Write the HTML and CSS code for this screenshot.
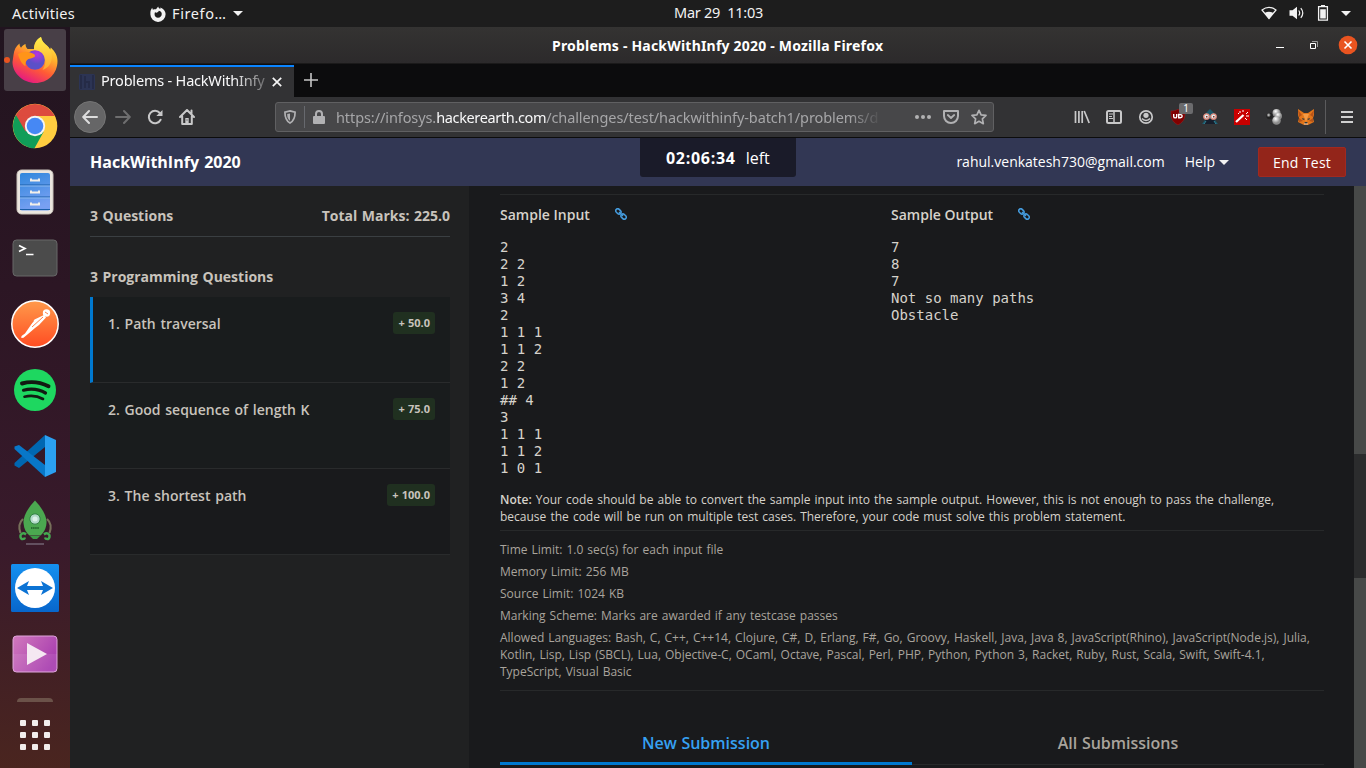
FILE: index.html
```html
<!DOCTYPE html>
<html lang="en">
<head>
<meta charset="utf-8">
<title>Problems - HackWithInfy 2020</title>
<link rel="stylesheet" href="styles.css">
</head>
<body>
<div class="desktop">
  <header class="topbar">
    <span class="activities">Activities</span>
    <span class="appmenu">
      <svg width="16" height="16" viewBox="0 0 16 16"><path fill="#f2f2f2" fill-rule="evenodd" d="M.4 6C.7 4 1.5 2.600 2.300 1.800c0 .9.300 1.500.700 1.900C4 3.100 5.300 3.200 6 3.300L8.200.4C8.200 1.500 9 2 10.400 3c0-.6 0-1-.2-1.600 3 1.100 5.400 3.500 5.400 6.800A7.600 7.600 0 0 1 .4 8.500zM5 6.200C3.700 9.500 5.500 11.800 8 11.800c2.600 0 4-2 3.700-4.300-.3-1.800-1.600-2.700-3-2.700.5 1-1.500 1.800-2.200 1.900z"/></svg>
      <span class="appname">Firefo…</span>
      <i class="caret"></i>
    </span>
    <span class="clock">Mar 29&nbsp; 11:03</span>
    <span class="tray">
      <svg width="16" height="14" viewBox="0 0 16 14"><path fill="none" stroke="#f2f2f2" stroke-width="1.200" d="M1 4Q8-1.200 15 4L8 12.500z"/><path fill="#f2f2f2" d="M3.600 7Q8 4.600 12.400 7L8 13z"/></svg>
      <svg width="16" height="14" viewBox="0 0 16 14"><path fill="#f2f2f2" d="M.5 4.300h3L8 .8v12.400L3.500 9.700h-3z"/><path fill="none" stroke="#f2f2f2" stroke-width="1.200" d="M9.700 4.500q2 2.500 0 5M11.800 2.200q4 4.800 0 9.600"/></svg>
      <svg width="12" height="16" viewBox="0 0 12 16"><path fill="none" stroke="#f2f2f2" stroke-width="1.300" d="M1.600 1.700h8.800v13.400H1.600z"/><path fill="#f2f2f2" d="M4 0h4v1.500H4zM3.200 4.200h5.600v9.300H3.200z"/></svg>
      <i class="caret"></i>
    </span>
  </header>

  <div class="workspace">
    <nav class="dock">
      <div class="dock-item active"><span class="dot"></span>
        <svg width="48" height="48" viewBox="0 0 48 48"><defs><linearGradient id="ff1" x1=".8" y1="0" x2=".3" y2="1"><stop offset="0" stop-color="#fff44f"/><stop offset=".35" stop-color="#ffb32c"/><stop offset=".65" stop-color="#ff5b35"/><stop offset="1" stop-color="#e31587"/></linearGradient><linearGradient id="ff3" x1="0" y1="0" x2="0" y2="1"><stop stop-color="#fff04a"/><stop offset="1" stop-color="#ffa52f"/></linearGradient><radialGradient id="ff2" cx=".6" cy=".2"><stop offset="0" stop-color="#b833e1"/><stop offset="1" stop-color="#5b50c8"/></radialGradient></defs>
        <path fill="url(#ff1)" d="M2.500 19C3 14 5 10 8.500 7.500c0 2 .5 3 1.500 4.200 1.500-2 3-3.100 4.500-3.700.2 2 .5 3.500 2 5L23 13c0-6 2.500-9.500 7-12 .5 3.500 2.500 6 5.500 8.500 1.500 1.200 2.500 2.500 3.500 4.500l.8-2.500C44.500 16 46.500 20 46.500 25c0 13-10 22-22 22S1.500 37.500 1.500 26z"/>
        <path fill="url(#ff3)" d="M23 14c0-6 2.500-10.500 7-13 .7 4 3 6.500 6.500 9 4 4 5 9 4 14-1 5-4 8-9 10 4-6 4-12-1-16-2-2-5-3.500-7.500-4z"/>
        <circle cx="24" cy="24" r="9.800" fill="url(#ff2)"/><path fill="#ff9419" d="M7 18c6-3 9-3 16 0 1 1 1.500 2 .5 3-2 1-4 1.500-6 2-2 1-3.500 3-3 7-3-1-6-6-7.500-12z"/></svg>
      </div>
      <div class="dock-item"><svg width="46" height="46" viewBox="0 0 46 46"><circle cx="23" cy="23" r="22.300" fill="#ffcd40"/><path fill="#dd4b3e" d="M3.200 13A22.300 22.300 0 0 1 42.800 13H23L14 27z"/><path fill="#109d58" d="M3.800 12.200A22.300 22.300 0 0 0 22.500 45.300L31.500 29z"/><path fill="#dd4b3e" d="M4 12L13.500 28.500 23 13z"/><circle cx="23" cy="23" r="10.200" fill="#f4f4f4"/><circle cx="23" cy="23" r="8.300" fill="#4688f4"/></svg></div>
      <div class="dock-item"><svg width="38" height="46" viewBox="0 0 38 46"><defs><linearGradient id="dr" x1="0" y1="0" x2=".3" y2="1"><stop stop-color="#2f87dc"/><stop offset="1" stop-color="#78a0f2"/></linearGradient></defs><rect x="1" y="1" width="36" height="44" rx="4.500" fill="#ebe6df" stroke="#c9c2ba"/><rect x="4" y="4" width="30" height="37.500" rx="2" fill="url(#dr)"/><path stroke="#1b5fa9" d="M4 16h30M4 28h30M4 40.500h30"/><path stroke="#8ab9f0" d="M4 17h30M4 29h30"/><g fill="none" stroke="#f3efe9" stroke-width="2"><path d="M15 9.500V11.500h8V9.500M15 21.500v2h8v-2M15 33.500v2h8v-2"/></g></svg></div>
      <div class="dock-item"><svg width="46" height="38" viewBox="0 0 46 38"><rect x="1" y="1" width="44" height="36" rx="3.500" fill="#4b4b4b" stroke="#686868"/><path fill="none" stroke="#fff" stroke-width="1.700" d="M7 6.500l6 3-6 3M14 15.500h7.500"/></svg></div>
      <div class="dock-item"><svg width="48" height="48" viewBox="0 0 48 48"><defs><linearGradient id="pm" x1="0" y1="0" x2="0" y2="1"><stop stop-color="#ff9a4b"/><stop offset="1" stop-color="#ff4c22"/></linearGradient></defs><circle cx="24" cy="24" r="23.200" fill="url(#pm)" stroke="#fff" stroke-width="1.500"/><circle cx="35.500" cy="13" r="3.700" fill="#fff"/><path fill="#fff" d="M33 15l2 2.500-7 7.500-4 3-7 6-4.500 3.800-2.200.2.200-2 3.500-2.500 5.500-8 4-6z"/><path fill="none" stroke="#ff7137" stroke-width=".9" d="M32 17L21 27M22.500 21L18 25.500M34 12l3 2"/></svg></div>
      <div class="dock-item"><svg width="44" height="44" viewBox="0 0 44 44"><circle cx="22" cy="22" r="21" fill="#1ed760"/><g fill="none" stroke="#121a12" stroke-linecap="round"><path stroke-width="3.900" d="M9 15.500c9-2.500 18-1.500 26.500 2.800"/><path stroke-width="3.200" d="M10.500 22.200c8-2 15.500-1 22 2.800"/><path stroke-width="2.600" d="M11.500 28.700c7-1.600 13-.8 18.500 2.300"/></g></svg></div>
      <div class="dock-item"><svg width="44" height="44" viewBox="0 0 44 44"><path fill="#0067b1" d="M32 1L1.500 29v2.500L6 34l26-21z"/><path fill="#0877c8" d="M32 43L1.500 15v-2.500L6 11l26 20z"/><path fill="#2ba0f1" d="M32 1l11 5v32l-11 5z"/></svg></div>
      <div class="dock-item"><svg width="38" height="46" viewBox="0 0 38 46"><path fill="none" stroke="#77705a" stroke-width="2.200" d="M7 20c-4.500 4-4.500 8-2.500 14M31 20c4.500 4 4.500 8 2.500 14"/><path fill="#4ba750" d="M19 1.500C27 10 31 18 30.500 24c-.5 6-3 10-6 12.500h-11C10 34 8 30 7.500 24 7 18 11 10 19 1.500z"/><circle cx="19" cy="20" r="5.200" fill="#b0d9c7" stroke="#328143"/><circle cx="19" cy="20" r="2.500" fill="#dcf1e8"/><path stroke="#286f30" stroke-width="2" stroke-dasharray="1.500 .6" d="M15 29h8"/><path fill="#3d9a47" d="M14 37h10l-3 3h-4z"/><path fill="none" stroke="#43aa50" stroke-width="2.400" d="M10 35.500c-3-2.500-6-.5-5.500 2.500s4 2.500 4.500.5M28 35.500c3-2.500 6-.5 5.500 2.500s-4 2.500-4.500.5"/><path stroke="#726373" stroke-width="1.500" d="M10 45h18"/></svg></div>
      <div class="dock-item"><svg width="48" height="48" viewBox="0 0 48 48"><defs><linearGradient id="tv" x1="0" y1="0" x2="0" y2="1"><stop stop-color="#1590ef"/><stop offset="1" stop-color="#0866cc"/></linearGradient></defs><rect width="48" height="48" rx="1.500" fill="url(#tv)"/><circle cx="24" cy="24" r="20" fill="#fff"/><path fill="#0c73d4" d="M6 24l12-7-2 5h16l-2-5 12 7-12 7 2-5H16l2 5z"/></svg></div>
      <div class="dock-item"><svg width="46" height="38" viewBox="0 0 46 38"><defs><linearGradient id="vd" x1="0" y1="0" x2="1" y2=".6"><stop stop-color="#d27abd"/><stop offset="1" stop-color="#a83daf"/></linearGradient></defs><rect x="1" y="1" width="44" height="36" rx="3.500" fill="url(#vd)" stroke="#dea5d9"/><path fill="#fff" fill-opacity=".08" d="M1 19h44v18H1z"/><path fill="#f5e8f2" d="M15 8v22l20-11z"/></svg></div>
      <div class="dock-sliver"></div>
      <div class="dock-grid"><i></i><i></i><i></i><i></i><i></i><i></i><i></i><i></i><i></i></div>
    </nav>

    <main class="window">
      <div class="titlebar"><b>Problems - HackWithInfy 2020 - Mozilla Firefox</b>
        <span class="winctl">
          <svg class="min" width="10" height="10" viewBox="0 0 10 10"><path stroke="#fff" d="M1 7.500h8"/></svg>
          <svg class="max" width="10" height="10" viewBox="0 0 10 10"><path fill="none" stroke="#fff" d="M1.500 3.500h5v5h-5z"/><path fill="none" stroke="#999" d="M3 1.500h5.500V7"/></svg>
          <svg width="20" height="20" viewBox="0 0 20 20"><circle cx="10" cy="10" r="9.300" fill="#e95420"/><path stroke="#fff" stroke-width="1.600" d="M6.500 6.500l7 7M13.500 6.500l-7 7"/></svg>
        </span>
      </div>
      <div class="tabs">
        <div class="tab">
          <svg width="16" height="16" viewBox="0 0 16 16"><rect width="16" height="16" rx="1.500" fill="#2c3454"/><path fill="none" stroke="#252b47" stroke-width="2" d="M2 1v14M6 2v12M6 8h4v6M14 1v14"/></svg>
          <span class="tabtitle">Problems - HackWithInfy</span>
          <svg width="10" height="10" viewBox="0 0 10 10"><path stroke="#f5f5f5" stroke-width="1.700" d="M.8.8l8.400 8.400M9.200.8L.8 9.200"/></svg>
        </div>
        <svg class="plus" width="14" height="14" viewBox="0 0 14 14"><path stroke="#c6c6c6" stroke-width="1.600" d="M7 0v14M0 7h14"/></svg>
      </div>
      <div class="toolbar">
        <span class="back"><svg width="16" height="16" viewBox="0 0 16 16"><path fill="none" stroke="#ddd" stroke-width="2" stroke-linecap="round" stroke-linejoin="round" d="M15 8H1.500M7 2L1.200 8 7 14"/></svg></span>
        <svg class="fwd" width="16" height="16" viewBox="0 0 16 16"><path fill="none" stroke="#6e6e6f" stroke-width="2" stroke-linecap="round" stroke-linejoin="round" d="M1 8h13.500M9 2l5.800 6L9 14"/></svg>
        <svg class="reload" width="16" height="16" viewBox="0 0 16 16"><path fill="none" stroke="#c8c8c9" stroke-width="2" stroke-linecap="round" d="M13.600 10.700A6.200 6.200 0 1 1 12.800 4"/><path fill="#c8c8c9" d="M15.500 1v6H9.300z"/></svg>
        <svg class="home" width="16" height="16" viewBox="0 0 16 16"><path fill="none" stroke="#c8c8c9" stroke-width="2" stroke-linejoin="round" stroke-linecap="round" d="M1 8l7-7 7 7M3.200 7.500V15h9.600V7.500M12.500 1.500v3"/><path fill="#c8c8c9" d="M6.300 9h3.400v6H6.300z"/><path fill="#323234" d="M7.500 10.500h1v1h-1z"/></svg>
        <div class="urlbar">
          <svg width="12" height="14" viewBox="0 0 12 14"><path fill="none" stroke="#b1b1b3" stroke-width="1.700" d="M6 .9l5.100 1.200c0 5.500-.8 8.800-5.100 11C1.700 10.900.9 7.600.9 2.100z"/><path fill="#b1b1b3" d="M6 3.400v7.400C3.800 9.200 3.200 7.300 3.200 4z"/></svg>
          <i class="sep"></i>
          <svg width="12" height="14" viewBox="0 0 12 14"><rect y="6" width="12" height="8" rx="1" fill="#b1b1b3"/><path fill="none" stroke="#b1b1b3" stroke-width="2" d="M3 7V4a3 3 0 0 1 6 0v3"/></svg>
          <span class="url">https://infosys.<em>hackerearth.com</em>/challenges/test/hackwithinfy-batch1/problems/d</span>
          <svg class="dots" width="16" height="4" viewBox="0 0 16 4"><g fill="#b1b1b3"><circle cx="2" cy="2" r="2"/><circle cx="8" cy="2" r="2"/><circle cx="14" cy="2" r="2"/></g></svg>
          <svg class="pocket" width="16" height="14" viewBox="0 0 16 14"><path fill="none" stroke="#b1b1b3" stroke-width="2" stroke-linejoin="round" d="M1 1h14v5a7 7 0 0 1-14 0z"/><path fill="none" stroke="#b1b1b3" stroke-width="1.800" stroke-linecap="round" stroke-linejoin="round" d="M4.800 5L8 8l3.200-3"/></svg>
          <svg class="star" width="16" height="16" viewBox="0 0 16 16"><path fill="none" stroke="#b1b1b3" stroke-width="1.700" stroke-linejoin="round" d="M8 1.300l2.100 4.500 4.900.6-3.600 3.400.9 4.900L8 12.300l-4.300 2.400.9-4.900L1 6.400l4.900-.6z"/></svg>
        </div>
        <div class="tools">
          <svg width="16" height="16" viewBox="0 0 16 16"><path stroke="#c8c8c9" stroke-width="1.700" d="M1.500 2v12M4.900 2v12M8.200 2v12M10.200 2l5 12"/></svg>
          <svg width="16" height="16" viewBox="0 0 16 16"><rect x="1" y="2" width="14" height="12" rx="1.500" fill="none" stroke="#c8c8c9" stroke-width="2"/><path stroke="#c8c8c9" stroke-width="1.500" d="M8 2v12"/><path stroke="#c8c8c9" d="M3 5h4M3 7.500h3M3 9.500h4"/></svg>
          <svg width="16" height="16" viewBox="0 0 16 16"><circle cx="8" cy="8" r="6.200" fill="none" stroke="#c8c8c9" stroke-width="1.700"/><circle cx="8" cy="6.300" r="2.600" fill="#c8c8c9"/><path fill="none" stroke="#c8c8c9" stroke-width="1.500" d="M4 9.500c2 2.500 6 2.500 8 0"/></svg>
          <span class="ublock"><svg width="16" height="16" viewBox="0 0 16 16"><path fill="#800000" stroke="#a32020" stroke-width=".5" d="M8 0c2 1.500 4 2 7 2 0 6 0 10-7 14C1 12 1 8 1 2c3 0 5-.5 7-2z"/><path fill="none" stroke="#fff" stroke-width="1.400" d="M3.700 5v2.400q0 1.500 1.500 1.500t1.500-1.500V5M8.700 5.500v3.300h1.500q2-.2 2-1.700t-2-1.600z"/></svg><b>1</b></span>
          <svg width="16" height="16" viewBox="0 0 16 16"><path fill="#1d596a" d="M8 0l4 4 1 7 3 4H0l3-4 1-7z"/><path fill="#171e2c" d="M4 10h8l2 5H2z"/><path stroke="#32879c" d="M4 12l-2 3M12 12l2 3"/><g fill="#d9eef0" stroke="#e08a7c" stroke-width="1.300"><circle cx="4.500" cy="7.500" r="2.700"/><circle cx="11.500" cy="7.500" r="2.700"/></g><path fill="#8e2c20" d="M4 7h1.500v1.500H4zM11 7h1.500v1.500H11z"/></svg>
          <svg width="16" height="16" viewBox="0 0 16 16"><path fill="#c90000" d="M0 0h16v16H0z"/><path stroke="#fff" stroke-width="2.200" d="M2 13l7.500-7"/><path stroke="#fff" d="M6 2v2M4 4l1 1M9 1v2M12 5l2-2M12 7h3M11 9l2 2"/></svg>
          <svg width="16" height="16" viewBox="0 0 16 16"><defs><radialGradient id="b1" cx=".4" cy=".3"><stop stop-color="#fff"/><stop offset="1" stop-color="#8a8a8a"/></radialGradient><radialGradient id="b2" cx=".35" cy=".35"><stop stop-color="#ddd"/><stop offset=".7" stop-color="#222"/></radialGradient></defs><circle cx="10.500" cy="4" r="4" fill="url(#b1)"/><circle cx="12.500" cy="7" r="3.500" fill="url(#b1)"/><circle cx="10.500" cy="11.500" r="4.300" fill="url(#b1)"/><circle cx="3.600" cy="7" r="3.200" fill="url(#b2)"/></svg>
          <svg width="16" height="16" viewBox="0 0 16 16"><path fill="#e2761b" d="M0 0l6 4h4l6-4v6l-1 3 1 4-4 2-2 1H6l-2-1-4-2 1-4-1-3z"/><path fill="#b65318" d="M0 1l4 5-3 2zM16 1l-4 5 3 2zM1 9l4 3-4 1zM15 9l-4 3 4 1z"/><path fill="#f49b44" d="M5 5h6L8 13z"/><path fill="#273a43" d="M4 9l3 1-2 1zM12 9l-3 1 2 1zM6.500 13h3L9 14.500H7z"/><path fill="#d6c0b0" d="M6 14.500h4v1H6z"/></svg>
        </div>
        <i class="divider"></i>
        <svg width="12" height="12" viewBox="0 0 12 12"><path stroke="#d0d0d0" stroke-width="2" d="M0 1h12M0 6h12M0 11h12"/></svg>
      </div>

      <div class="page">
        <div class="site-header">
          <b class="brand">HackWithInfy 2020</b>
          <div class="timer"><b>02:06:34</b><span>left</span></div>
          <div class="account"><span class="mail">rahul.venkatesh730@gmail.com</span><span class="help">Help</span><i class="caret"></i><span class="end">End Test</span></div>
        </div>
        <div class="columns">
          <aside class="sidebar">
            <div class="summary"><b>3 Questions</b><b>Total Marks: 225.0</b></div>
            <h2>3 Programming Questions</h2>
            <ol class="questions">
              <li class="current"><span>1. Path traversal</span><b>+ 50.0</b></li>
              <li><span>2. Good sequence of length K</span><b>+ 75.0</b></li>
              <li class="last"><span>3. The shortest path</span><b>+ 100.0</b></li>
            </ol>
          </aside>
          <section class="problem">
            <div class="samples">
              <div class="sample">
                <h3><span>Sample Input</span><svg width="12" height="12" viewBox="0 0 12 12"><g fill="none" stroke="#459cde" stroke-width="1.500"><rect x="-2.900" y="-2" width="5.800" height="4" rx="2" transform="translate(3.400 3.400) rotate(45)"/><rect x="-2.900" y="-2" width="5.800" height="4" rx="2" transform="translate(8.600 8.600) rotate(45)"/><path d="M4 4l4 4"/></g></svg></h3>
<pre>2
2 2
1 2
3 4
2
1 1 1
1 1 2
2 2
1 2
## 4
3
1 1 1
1 1 2
1 0 1</pre>
              </div>
              <div class="sample">
                <h3><span>Sample Output</span><svg width="12" height="12" viewBox="0 0 12 12"><g fill="none" stroke="#459cde" stroke-width="1.500"><rect x="-2.900" y="-2" width="5.800" height="4" rx="2" transform="translate(3.400 3.400) rotate(45)"/><rect x="-2.900" y="-2" width="5.800" height="4" rx="2" transform="translate(8.600 8.600) rotate(45)"/><path d="M4 4l4 4"/></g></svg></h3>
<pre>7
8
7
Not so many paths
Obstacle</pre>
              </div>
            </div>
            <p class="note"><b>Note:</b> Your code should be able to convert the sample input into the sample output. However, this is not enough to pass the challenge,<br>because the code will be run on multiple test cases. Therefore, your code must solve this problem statement.</p>
            <div class="limits">
              <p>Time Limit: 1.0 sec(s) for each input file</p>
              <p>Memory Limit: 256 MB</p>
              <p>Source Limit: 1024 KB</p>
              <p>Marking Scheme: Marks are awarded if any testcase passes</p>
              <p>Allowed Languages: Bash, C, C++, C++14, Clojure, C#, D, Erlang, F#, Go, Groovy, Haskell, Java, Java 8, JavaScript(Rhino), JavaScript(Node.js), Julia,<br>Kotlin, Lisp, Lisp (SBCL), Lua, Objective-C, OCaml, Octave, Pascal, Perl, PHP, Python, Python 3, Racket, Ruby, Rust, Scala, Swift, Swift-4.1,<br>TypeScript, Visual Basic</p>
            </div>
            <div class="subtabs"><div class="on">New Submission</div><div>All Submissions</div></div>
          </section>
          <div class="scroll"><i></i><i></i></div>
        </div>
      </div>
    </main>
  </div>
</div>
</body>
</html>
```
FILE: styles.css
```css
* { box-sizing: border-box; }
body { margin: 0; background: #0c0c0d; font-family: "Open Sans", "Noto Sans", sans-serif; }
svg { display: block; flex: none; }
p, h2, h3, pre, ol { margin: 0; padding: 0; }
.desktop { width: 1366px; height: 768px; overflow: hidden; display: flex; flex-direction: column; }
.caret { border: 5px solid transparent; border-top-color: #f2f2f2; border-bottom: 0; flex: none; }

.topbar { height: 27px; flex: none; background: #1d1d1d; color: #f2f2f2; font: 14.500px/20px "Noto Sans", sans-serif; display: grid; grid-template-columns: 138px 1fr 1fr; align-items: center; position: relative; }
.activities { padding: 0 0 1px 12px; letter-spacing: .26px; }
.appmenu { display: flex; align-items: center; padding-left: 12px; gap: 6px; }
.appname { width: 56px; letter-spacing: .6px; padding-bottom: 1px; margin-right: -1px; white-space: nowrap; }
.clock { position: absolute; left: 674px; top: 2px; letter-spacing: -.25px; }
.tray { display: flex; align-items: center; justify-content: flex-end; gap: 12px; padding: 0 15px 1px 0; }

.workspace { flex: 1; display: flex; min-height: 0; }
.dock { width: 70px; flex: none; background: linear-gradient(#21141f, #2c1624 35%, #391a2b 70%, #4a251f); overflow: hidden; }
.dock-item { height: 66px; display: flex; align-items: center; justify-content: center; position: relative; }
.dock-item.active::before { content: ""; position: absolute; left: 4px; top: 2px; width: 62px; height: 62px; background: #483f47; border-radius: 3px; }
.dock-item svg { position: relative; }
.dot { position: absolute; left: 4px; top: 30px; width: 6px; height: 6px; border-radius: 50%; background: #e95420; }
.dock-sliver { width: 36px; height: 4px; margin: 11px auto 0; background: #6b5249; border-radius: 5px 5px 0 0; }
.dock-grid { width: 30px; margin: 18px auto 0; display: grid; grid-template-columns: repeat(3, 6px); gap: 6px; }
.dock-grid i { width: 6px; height: 6px; border-radius: 1px; background: #f2eeec; }

.window { flex: 1; display: flex; flex-direction: column; min-width: 0; }
.titlebar { height: 37px; flex: none; background: linear-gradient(#343332, #2c2a2b); border-bottom: 1px solid #1b1a1a; color: #fff; font: 14px "Noto Sans", sans-serif; display: flex; align-items: center; padding-left: 482px; }
.titlebar b { white-space: nowrap; letter-spacing: .2px; }
.winctl { margin-left: auto; padding-right: 8px; display: flex; align-items: center; }
.min { margin-right: 24px; }
.max { margin-right: 19px; }
.tabs { height: 33px; flex: none; background: #0c0c0d; display: flex; padding-top: 1px; }
.tab { width: 224px; background: #323234; border-top: 2px solid #0a84ff; display: flex; align-items: center; padding-left: 9px; color: #f9f9fa; font: 14.500px/20px "Noto Sans", sans-serif; }
.tabtitle { width: 164px; margin: 0 7px 4px 6px; white-space: nowrap; letter-spacing: -.2px; -webkit-mask: linear-gradient(90deg, #000 80%, rgba(0,0,0,.3)); mask: linear-gradient(90deg, #000 80%, rgba(0,0,0,.3)); }
.plus { margin: 8px 0 0 10px; }
.toolbar { height: 41px; flex: none; background: #323234; border-bottom: 1px solid #0c0c0d; display: flex; align-items: center; padding-left: 4px; }
.back { width: 32px; height: 32px; border-radius: 50%; background: #666667; border: 1px solid #757575; display: flex; align-items: center; justify-content: center; }
.fwd { margin-left: 9px; }
.reload, .home { margin-left: 16px; }
.urlbar { width: 719px; height: 30px; margin-left: 80px; background: #474749; border: 1px solid #606062; border-radius: 3px; display: flex; align-items: center; padding-left: 8px; }
.sep { width: 1px; height: 22px; background: #67696e; margin: 0 8px; }
.url { width: 546px; margin-left: 11px; white-space: nowrap; color: #a6a6a8; letter-spacing: -.09px; font: 14.500px "Noto Sans", sans-serif; -webkit-mask: linear-gradient(90deg, #000 94%, transparent); mask: linear-gradient(90deg, #000 94%, transparent); }
.url em { font-style: normal; color: #f9f9fa; letter-spacing: -.36px; }
.dots { margin-left: 33px; }
.pocket { margin-left: 12px; }
.star { margin-left: 12px; }
.tools { display: flex; gap: 16px; margin-left: 80px; }
.ublock { position: relative; }
.ublock b { position: absolute; left: 9px; top: -6px; width: 14px; height: 11px; background: #6b6b6d; border-radius: 2px; color: #fff; font: 10px/11px "Noto Sans", sans-serif; text-align: center; }
.divider { width: 1px; height: 34px; background: #5b5b5d; margin: 0 15px 0 11px; }

.page { flex: 1; display: flex; flex-direction: column; min-height: 0; color: #c8c3bc; }
.site-header { height: 48px; flex: none; position: relative; background: #323754; color: #fff; display: flex; align-items: center; padding-left: 20px; }
.brand { font-size: 16px; word-spacing: 1px; }
.timer { position: absolute; left: 570px; top: 0; width: 156px; height: 39px; background: #1a1b29; border-radius: 0 0 3px 3px; display: flex; align-items: center; padding: 0 0 0 26px; font-size: 16px; gap: 10px; }
.timer b { letter-spacing: .7px; }
.account { margin-left: auto; display: flex; align-items: center; padding-right: 20px; font-size: 14px; }
.mail, .help { padding-bottom: 2px; }
.help { margin: 0 4px 0 20px; }
.end { width: 88px; height: 30px; margin-left: 29px; background: #93251a; border: 1px solid #a12920; border-radius: 2px; display: flex; align-items: center; justify-content: center; letter-spacing: .2px; word-spacing: .5px; }
.columns { flex: 1; display: flex; min-height: 0; }
.sidebar { width: 399px; flex: none; background: #202122; padding: 0 19px 0 20px; }
.summary { height: 51px; border-bottom: 1px solid #3a3f42; display: flex; justify-content: space-between; align-items: center; padding-top: 9px; font-size: 14px; word-spacing: .9px; }
h2 { height: 60px; padding-top: 30px; font-size: 14px; line-height: 20px; word-spacing: .9px; }
.questions { list-style: none; }
.questions li { height: 86px; background: #191c1d; border-bottom: 1px solid #292b2c; display: flex; justify-content: space-between; align-items: flex-start; padding: 15px 15px 0 18px; font-size: 14px; line-height: 24px; }
.questions span { font-weight: 600; word-spacing: 1.100px; }
.questions .current { border-left: 3px solid #0079d0; padding-left: 15px; }
.questions .last { background: #191a1c; }
.questions b { height: 22px; background: #203020; border-radius: 3px; padding: 0 5px; font-size: 11px; line-height: 22px; word-spacing: .4px; }
.problem { width: 885px; background: #191a1c; padding: 8px 30px 0 31px; }
.samples { height: 291px; border-top: 1px solid #27292a; display: grid; grid-template-columns: 391px 1fr; align-content: start; padding-top: 9px; }
h3 { display: flex; align-items: center; gap: 25px; height: 20px; font-size: 14px; font-weight: 600; color: #d6d2cb; }
pre { margin-top: 15px; font: 14px/17px "DejaVu Sans Mono", monospace; color: #d6d2cb; }
.note { height: 46px; border-bottom: 1px solid #27292a; padding-top: 6px; font-size: 12px; line-height: 17px; color: #d6d2cb; white-space: nowrap; word-spacing: .99px; }
.note b { font-weight: 600; }
.limits { height: 160px; border-bottom: 1px solid #27292a; padding-top: 10px; font-size: 12px; line-height: 17px; color: #a9a49c; white-space: nowrap; word-spacing: .9px; }
.limits p { margin-bottom: 5px; }
.subtabs { display: grid; grid-template-columns: 1fr 1fr; height: 74px; font-size: 16px; font-weight: 600; word-spacing: .5px; text-align: center; color: #a9a49c; padding-top: 33px; }
.subtabs div { line-height: 38px; border-bottom: 1px solid #27292a; }
.subtabs .on { color: #36a1f3; border-bottom: 3px solid #0079d0; }
.scroll { width: 12px; background: #2b2c2d; display: flex; flex-direction: column; }
.scroll i { height: 268px; background: #474948; }
.scroll i + i { margin-top: 124px; height: 190px; }
```
